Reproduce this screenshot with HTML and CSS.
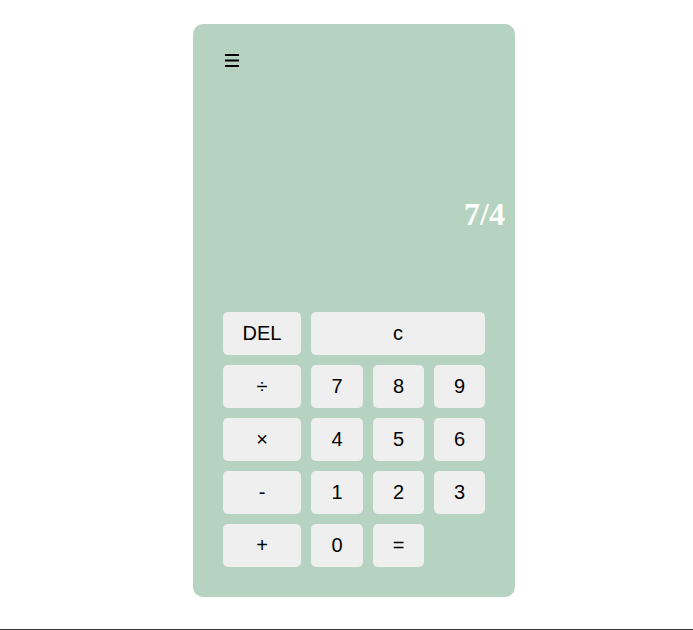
FILE: index.html
```html
<!DOCTYPE html>
<html lang="en">
<head>
<meta charset="utf-8">
<title>Calculator</title>
<link rel="stylesheet" href="styles.css">
</head>
<body>
<main class="page">
  <section class="calc">
    <header class="calc-head">
      <svg class="menu-icon" width="14" height="13" viewBox="0 0 14 13" aria-label="menu">
        <rect x="0" y="0" width="14" height="2" fill="#000"/>
        <rect x="0" y="5.5" width="14" height="2" fill="#000"/>
        <rect x="0" y="11" width="14" height="2" fill="#000"/>
      </svg>
    </header>
    <div class="display"><span class="result">7/4</span></div>
    <div class="keys">
      <button class="key">DEL</button>
      <button class="key key-wide">c</button>
      <button class="key">÷</button>
      <button class="key">7</button>
      <button class="key">8</button>
      <button class="key">9</button>
      <button class="key">×</button>
      <button class="key">4</button>
      <button class="key">5</button>
      <button class="key">6</button>
      <button class="key">-</button>
      <button class="key">1</button>
      <button class="key">2</button>
      <button class="key">3</button>
      <button class="key">+</button>
      <button class="key">0</button>
      <button class="key">=</button>
    </div>
  </section>
  <div class="bottom-line"></div>
</main>
</body>
</html>
```
FILE: styles.css
```css
html, body {
  margin: 0;
  padding: 0;
  background: #ffffff;
}
.page {
  padding-top: 24px;
  overflow: hidden;
}
.calc {
  box-sizing: border-box;
  width: 322px;
  height: 573px;
  margin-left: 193px;
  padding: 30px;
  background: #b5d3c0;
  border-radius: 10px;
  display: flex;
  flex-direction: column;
}
.calc-head {
  height: 12px;
  display: flex;
}
.menu-icon {
  display: block;
  margin-left: 2px;
}
.display {
  height: 236px;
  margin-right: -20px;
  margin-bottom: 10px;
  display: flex;
  flex-direction: column;
  justify-content: flex-end;
  align-items: flex-end;
  padding-bottom: 70px;
  box-sizing: border-box;
}
.result {
  font-family: "Liberation Serif", "Times New Roman", serif;
  font-weight: bold;
  font-size: 32px;
  line-height: 36px;
  color: #ffffff;
}
.keys {
  display: grid;
  grid-template-columns: 78px 52px 51px 51px;
  grid-auto-rows: 43px;
  gap: 10px;
}
.key {
  border: none;
  margin: 0;
  padding: 0;
  background: #efefef;
  border-radius: 5px;
  font-family: "Liberation Sans", Arial, sans-serif;
  font-size: 20px;
  color: #000000;
}
.key-wide {
  grid-column: span 3;
}
.bottom-line {
  margin-top: 32px;
  height: 1px;
  background: #3a3a3a;
}
```
